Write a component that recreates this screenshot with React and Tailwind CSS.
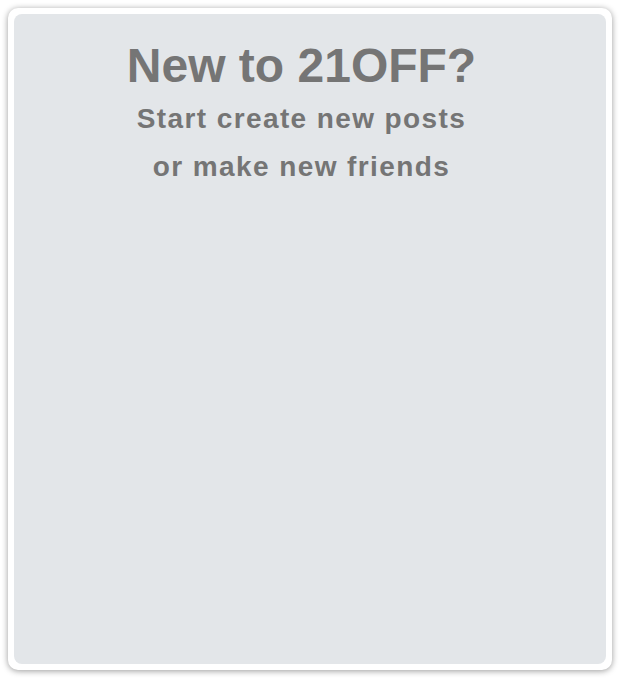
export default function App() {
  return (
    <div className="w-[620px] h-[680px] bg-white pt-2 pl-2" style={{ fontFamily: '"Liberation Sans", Arial, sans-serif' }}>
      <div className="w-[604px] h-[662px] bg-white rounded-[10px] p-1.5 shadow-[0_1px_6px_rgba(0,0,0,0.4)]">
        <div className="w-full h-full bg-[#e3e6e9] rounded-[8px] pt-[24px] pr-[17px] flex flex-col items-center text-[#757575] font-bold">
          <div className="text-[48px] leading-[56px]">New to 21OFF?</div>
          <div className="text-[28px] leading-[48px] tracking-[1.4px] pt-[1px]">Start create new posts</div>
          <div className="text-[28px] leading-[48px] tracking-[1.4px]">or make new friends</div>
        </div>
      </div>
    </div>
  );
}
